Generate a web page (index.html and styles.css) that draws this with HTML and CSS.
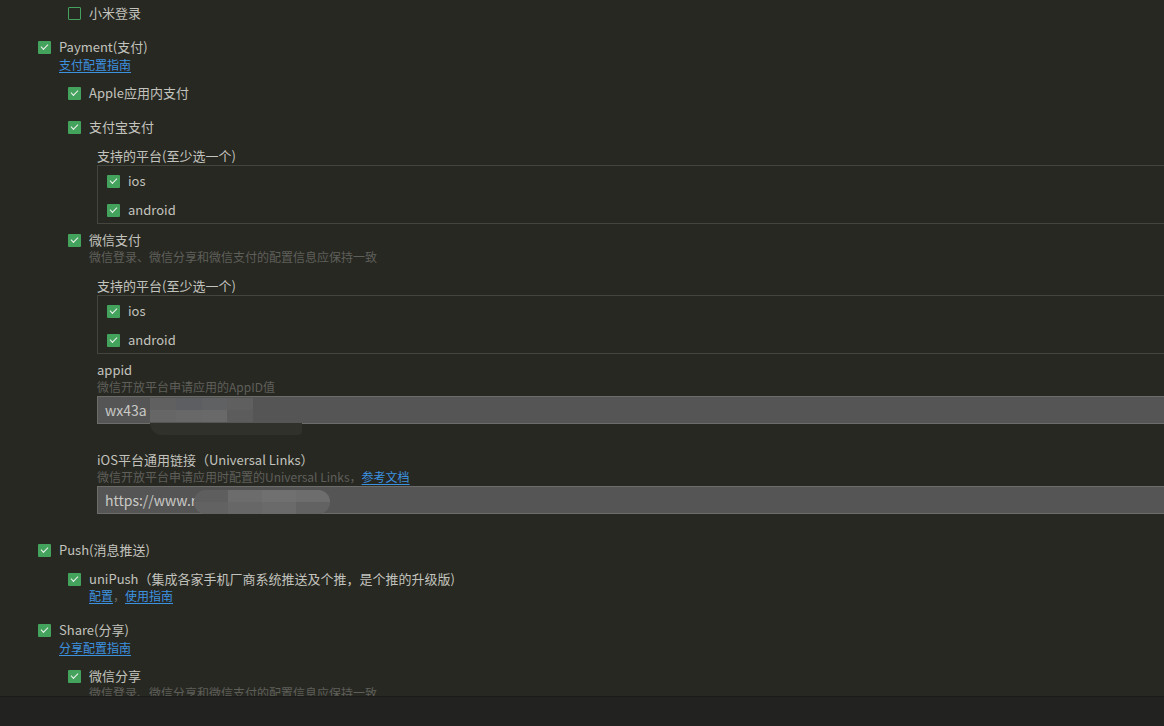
FILE: index.html
```html
<!DOCTYPE html>
<html lang="zh">
<head>
<meta charset="utf-8">
<title>模块配置</title>
<link rel="stylesheet" href="styles.css">
</head>
<body>
<div class="page">
  <div class="scroll">
    <div class="lvl2 first">
      <div class="row"><span class="cb off"></span><span class="txt">小米登录</span></div>
    </div>

    <div class="lvl1 payment">
      <div class="row"><span class="cb on"></span><span class="txt">Payment(支付)</span></div>
      <div class="links"><a href="#">支付配置指南</a></div>

      <div class="lvl2 apple">
        <div class="row"><span class="cb on"></span><span class="txt">Apple应用内支付</span></div>
      </div>

      <div class="lvl2 alipay">
        <div class="row"><span class="cb on"></span><span class="txt">支付宝支付</span></div>
        <div class="sub">
          <div class="label">支持的平台(至少选一个)</div>
          <div class="platforms">
            <div class="row"><span class="cb on"></span><span class="txt">ios</span></div>
            <div class="row"><span class="cb on"></span><span class="txt">android</span></div>
          </div>
        </div>
      </div>

      <div class="lvl2 wxpay">
        <div class="row"><span class="cb on"></span><span class="txt">微信支付</span></div>
        <div class="desc">微信登录、微信分享和微信支付的配置信息应保持一致</div>
        <div class="sub">
          <div class="label gap12">支持的平台(至少选一个)</div>
          <div class="platforms">
            <div class="row"><span class="cb on"></span><span class="txt">ios</span></div>
            <div class="row"><span class="cb on"></span><span class="txt">android</span></div>
          </div>
          <div class="field first-field">
            <div class="label">appid</div>
            <div class="desc">微信开放平台申请应用的AppID值</div>
            <div class="input">wx43a<span class="mosaic m1"><i></i><i></i><i></i><i></i><i></i><i></i><i></i></span><span class="smudge"></span></div>
          </div>
          <div class="field">
            <div class="label">iOS平台通用链接（Universal Links）</div>
            <div class="desc">微信开放平台申请应用时配置的Universal Links，<a href="#">参考文档</a></div>
            <div class="input">https://www.r<span class="mosaic m2"><i></i><i></i><i></i><i></i><i></i><i></i><i></i><i></i></span></div>
          </div>
        </div>
      </div>
    </div>

    <div class="lvl1 push">
      <div class="row"><span class="cb on"></span><span class="txt">Push(消息推送)</span></div>
      <div class="lvl2 unipush">
        <div class="row"><span class="cb on"></span><span class="txt">uniPush（集成各家手机厂商系统推送及个推，是个推的升级版)</span></div>
        <div class="links"><a href="#">配置</a><span class="comma">，</span><a href="#">使用指南</a></div>
      </div>
    </div>

    <div class="lvl1 share">
      <div class="row"><span class="cb on"></span><span class="txt">Share(分享)</span></div>
      <div class="links"><a href="#">分享配置指南</a></div>
      <div class="lvl2 wxshare">
        <div class="row"><span class="cb on"></span><span class="txt">微信分享</span></div>
        <div class="desc">微信登录、微信分享和微信支付的配置信息应保持一致</div>
      </div>
    </div>
  </div>
  <div class="statusbar"></div>
</div>
</body>
</html>
```

FILE: styles.css
```css
* { box-sizing: border-box; }
html, body {
  margin: 0;
  padding: 0;
  height: 100%;
  background: #272822;
  overflow: hidden;
}
body {
  font-family: "Noto Sans CJK SC", "Noto Sans", sans-serif;
  font-size: 13px;
  color: #c3c3be;
}
.page {
  display: flex;
  flex-direction: column;
  height: 726px;
}
.scroll {
  height: 696px;
  overflow: hidden;
  padding: 3px 0 0 38px;
}
.statusbar {
  height: 30px;
  background: #222220;
  border-top: 1px solid #1b1b18;
}

.row {
  display: flex;
  align-items: center;
  height: 20px;
  gap: 8px;
  white-space: nowrap;
}
.txt { line-height: 20px; }

.cb {
  flex: none;
  width: 13px;
  height: 13px;
  border-radius: 1px;
  position: relative;
}
.cb.off {
  border: 1px solid #43a35c;
}
.cb.on {
  background: #43a35c;
}
.cb.on::after {
  content: "";
  position: absolute;
  left: 3px;
  top: 3px;
  width: 6px;
  height: 3px;
  border-left: 1.5px solid #f2f2f2;
  border-bottom: 1.5px solid #f2f2f2;
  transform: rotate(-45deg);
}

.lvl2 { padding-left: 30px; }
.lvl1 > .links, .lvl1 > .desc { padding-left: 21px; }
.lvl2 > .links, .lvl2 > .desc { padding-left: 21px; }

.links {
  font-size: 12px;
  line-height: 16px;
  height: 16px;
  color: #6a6a65;
}
a {
  color: #3d92e0;
  text-decoration: underline;
  text-underline-offset: 2px;
}
.comma { color: #6a6a65; }

.desc {
  font-size: 12px;
  line-height: 16px;
  color: #5f5f5a;
  white-space: nowrap;
}
.lvl2 > .desc { margin-top: -1px; }

.payment { margin-top: 14px; }
.apple { margin-top: 10px; }
.alipay { margin-top: 14px; }
.wxpay { margin-top: 6px; }

.sub { padding-left: 29px; }
.label {
  line-height: 18px;
  height: 18px;
  white-space: nowrap;
}
.alipay .sub > .label { margin-top: 10px; }
.label.gap12 { margin-top: 12px; }

.platforms {
  border: 1px solid #45453f;
  border-right: none;
  padding: 5px 0 3px 9px;
  display: flex;
  flex-direction: column;
  gap: 9px;
}

.field { margin-top: 27px; }
.field.first-field { margin-top: 7px; }
.input {
  position: relative;
  margin-top: 1px;
  height: 28px;
  background: #555555;
  border: 1px solid #6c6c6a;
  border-right: none;
  padding-left: 7px;
  line-height: 26px;
  color: #c9c9c6;
  font-size: 14px;
  white-space: nowrap;
}
.mosaic {
  position: absolute;
  display: grid;
  grid-auto-flow: column;
  grid-template-rows: 1fr 1fr;
}
.mosaic i { display: block; }
.m1 {
  left: 52px;
  top: 1px;
  width: 103px;
  height: 24px;
  grid-template-columns: repeat(4, 1fr);
  background: #5c5c5c;
}
.m1 i:nth-child(1) { background: #606060; }
.m1 i:nth-child(2) { background: #666666; }
.m1 i:nth-child(3) { background: #5d5e61; }
.m1 i:nth-child(4) { background: #686868; }
.m1 i:nth-child(5) { background: #606163; }
.m1 i:nth-child(6) { background: #696969; }
.m1 i:nth-child(7) { background: #5f5f5f; }
.smudge {
  position: absolute;
  left: 52px;
  top: 26px;
  width: 152px;
  height: 12px;
  background: #31312c;
  border-radius: 0 0 10px 30px;
}
.m2 {
  left: 96px;
  top: 3px;
  width: 136px;
  height: 24px;
  border-radius: 12px;
  overflow: hidden;
  grid-template-columns: repeat(4, 1fr);
  background: #646464;
}
.m2 i:nth-child(1) { background: #5e5e5e; }
.m2 i:nth-child(2) { background: #626262; }
.m2 i:nth-child(3) { background: #6c6c6c; }
.m2 i:nth-child(4) { background: #676767; }
.m2 i:nth-child(5) { background: #707070; }
.m2 i:nth-child(6) { background: #6a6a6a; }
.m2 i:nth-child(7) { background: #6d6d6d; }
.m2 i:nth-child(8) { background: #626262; }

.push { margin-top: 26px; }
.unipush { margin-top: 9px; }
.unipush > .links { margin-top: -1px; }
.share { margin-top: 16px; }
.wxshare { margin-top: 10px; }
```
